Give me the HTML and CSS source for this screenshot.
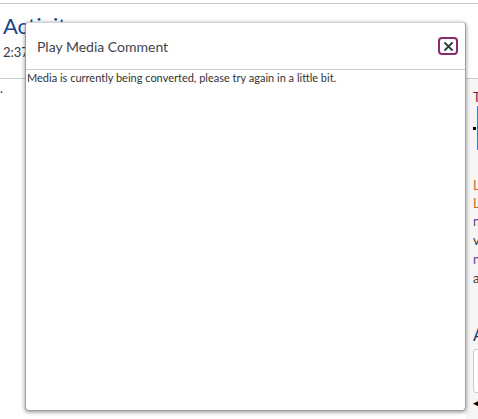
FILE: index.html
```html
<!DOCTYPE html>
<html>
  <head>
    <title>Activity</title>
    <link rel="stylesheet" href="styles.css">
  </head>
  <body>
    <div class="page">
      <div class="topbar"></div>
      <div class="header">
        <h1 class="title">Activity</h1>
        <div class="time">2:37 PM</div>
      </div>
      <div class="content">
        <div class="main">.</div>
        <div class="side">
          <div class="side-label">To Do</div>
          <div class="side-row">
            <span class="bullet"></span>
            <div class="side-box"></div>
          </div>
          <div class="links">
            <div class="orange">Lesson</div>
            <div class="orange">Lesson</div>
            <div class="purple">new</div>
            <div class="dark">view</div>
            <div class="purple">new</div>
            <div class="dark">all</div>
          </div>
          <div class="side-head">Add</div>
          <div class="side-input"></div>
          <div class="side-arrow">&#9664;</div>
        </div>
      </div>
    </div>

    <div class="dialog">
      <div class="dialog-head">
        <span class="dialog-title">Play Media Comment</span>
        <button class="close" title="Close">
          <svg width="9" height="9" viewBox="0 0 9 9">
            <path d="M1 1 L8 8 M8 1 L1 8" stroke="#2d3b45" stroke-width="1.8" stroke-linecap="round"/>
          </svg>
        </button>
      </div>
      <div class="dialog-body">Media is currently being converted, please try again in a little bit.</div>
    </div>
  </body>
</html>
```
FILE: styles.css
```css
* {
  box-sizing: border-box;
}

html, body {
  margin: 0;
  padding: 0;
  width: 100%;
  height: 100%;
  overflow: hidden;
}

body {
  font-family: Lato, "Open Sans", sans-serif;
  background: #fff;
  color: #2d3b45;
}

.page {
  position: relative;
  display: flex;
  flex-direction: column;
  height: 100%;
}

.topbar {
  flex: none;
  height: 4px;
  border-bottom: 1px solid #c7cdd1;
}

.header {
  flex: none;
  padding: 9px 3px 0 3px;
  height: 75px;
  border-bottom: 1px solid #c7cdd1;
}

.title {
  margin: 0;
  font-size: 22px;
  font-weight: 400;
  line-height: 26px;
  color: #1c4587;
}

.time {
  font-size: 13px;
  line-height: 18px;
  margin-top: 4px;
  color: #2d3b45;
}

.content {
  display: flex;
  flex: 1;
  min-height: 0;
}

.main {
  flex: 0 0 466px;
  padding: 2px 0 0 0;
  font-size: 13px;
  line-height: 14px;
}

.side {
  flex: 1;
  min-width: 0;
  overflow: hidden;
  background: #f5f5f5;
  padding: 9px 0 0 7px;
  font-size: 13px;
  white-space: nowrap;
}

.side-label {
  line-height: 18px;
  color: #8b1d1d;
}

.side-row {
  display: flex;
  align-items: center;
  gap: 1px;
}

.bullet {
  flex: none;
  width: 3px;
  height: 3px;
  background: #000;
}

.side-box {
  flex: none;
  width: 60px;
  height: 44px;
  border-left: 2px solid #2d7bd4;
  background: #fff;
}

.links {
  margin-top: 26px;
  line-height: 19px;
}

.orange {
  color: #c96a2e;
  line-height: 18px;
}

.purple {
  color: #5b3c8a;
}

.dark {
  color: #3b3b3b;
}

.side-head {
  margin-top: 37px;
  font-size: 17px;
  line-height: 20px;
  color: #1c3c6e;
}

.side-input {
  margin-top: 4px;
  width: 60px;
  height: 44px;
  background: #fff;
  border: 1px solid #c7cdd1;
  border-radius: 3px;
}

.side-arrow {
  font-size: 9px;
  line-height: 14px;
  margin-top: 3px;
  color: #000;
}

.dialog {
  position: absolute;
  left: 25px;
  top: 22px;
  width: 441px;
  height: 389px;
  background: #fff;
  border: 1px solid #9aa0a5;
  border-top-color: #d0d4d7;
  border-radius: 4px;
  box-shadow: 0 1px 4px rgba(0, 0, 0, 0.45);
}

.dialog-head {
  display: flex;
  align-items: center;
  justify-content: space-between;
  height: 47px;
  padding: 0 7px 0 11px;
  border-bottom: 1px solid #c7cdd1;
}

.dialog-title {
  font-size: 14px;
  color: #3d454c;
  margin-top: 1px;
}

.close {
  display: flex;
  align-items: center;
  justify-content: center;
  width: 20px;
  height: 18px;
  padding: 0;
  background: #fff;
  border: 2px solid #8a2a6e;
  border-radius: 4px;
}

.dialog-body {
  padding: 1px 0 0 1px;
  font-size: 11px;
  line-height: 14px;
  color: #333;
}
```
